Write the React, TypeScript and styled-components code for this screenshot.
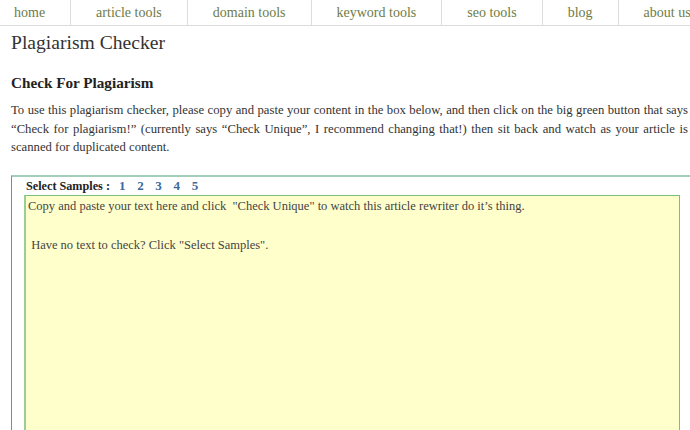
import React from 'react'
import styled, { createGlobalStyle } from 'styled-components'

const GlobalStyle = createGlobalStyle`
  html, body {
    margin: 0;
    padding: 0;
    background: #fff;
    overflow: hidden;
  }
  body {
    font-family: "Liberation Serif", "DejaVu Serif", serif;
    color: #333;
  }
`

const Page = styled.div`
  width: 720px;
  font-family: "Liberation Serif", "DejaVu Serif", serif;
`

const Nav = styled.nav`
  display: flex;
  height: 25px;
  border-bottom: 1px solid #dcdcdc;
  background: #fff;
`

const NavItem = styled.a<{ $first?: boolean }>`
  display: flex;
  align-items: center;
  padding: 1px 25px 0 ${(p) => (p.$first ? '14px' : '25px')};
  border-right: 1px solid #dcdcdc;
  font-size: 14px;
  color: #6e7b45;
  text-decoration: none;
  white-space: nowrap;
`

const Content = styled.main`
  padding: 0 0 0 11px;
`

const Title = styled.h1`
  margin: 5px 0 0;
  font-family: "Liberation Serif", serif;
  font-size: 19.6px;
  font-weight: normal;
  color: #333;
  line-height: 24px;
`

const Heading = styled.h2`
  margin: 18px 0 0;
  font-family: "Liberation Serif", serif;
  font-size: 15.2px;
  font-weight: bold;
  color: #222;
  line-height: 20px;
`

const Intro = styled.p`
  margin: 8px 0 0;
  width: 677px;
  font-size: 12.7px;
  line-height: 18.5px;
  text-align: justify;
  color: #333;
`

const CheckerBox = styled.section`
  margin-top: 18px;
  border: 1px solid #5f9f80;
  border-top: 2px solid #a3cfba;
  border-right: none;
  padding: 0 0 0 12px;
  height: 260px;
`

const SampleBar = styled.div`
  display: flex;
  align-items: baseline;
  height: 18px;
  padding-left: 2px;
`

const SampleLabel = styled.span`
  font-size: 12.2px;
  font-weight: bold;
  color: #222;
  margin-right: 9px;
  line-height: 18px;
`

const SampleLink = styled.a`
  font-size: 13px;
  font-weight: bold;
  color: #3a6a9e;
  text-decoration: none;
  width: 18.2px;
  line-height: 18px;
`

const TextArea = styled.div`
  width: 649px;
  height: 260px;
  background: #ffffcc;
  border: 1px solid #7cbf7c;
  border-left: 2px solid #98cf98;
  padding: 1px 2px 0;
  font-size: 12.5px;
  line-height: 19.5px;
  color: #444;
  white-space: pre-wrap;
`

const samples = [1, 2, 3, 4, 5]

export default function App() {
  return (
    <Page>
      <GlobalStyle />
      <Nav>
        <NavItem $first>home</NavItem>
        <NavItem>article tools</NavItem>
        <NavItem>domain tools</NavItem>
        <NavItem>keyword tools</NavItem>
        <NavItem>seo tools</NavItem>
        <NavItem>blog</NavItem>
        <NavItem>about us</NavItem>
      </Nav>
      <Content>
        <Title>Plagiarism Checker</Title>
        <Heading>Check For Plagiarism</Heading>
        <Intro>
          To use this plagiarism checker, please copy and paste your content in the box below, and then click on the big green button that says
          “Check for plagiarism!” (currently says “Check Unique”, I recommend changing that!) then sit back and watch as your article is
          scanned for duplicated content.
        </Intro>
        <CheckerBox>
          <SampleBar>
            <SampleLabel>Select Samples :</SampleLabel>
            {samples.map((n) => (
              <SampleLink key={n}>{n}</SampleLink>
            ))}
          </SampleBar>
          <TextArea>
            {'Copy and paste your text here and click  "Check Unique" to watch this article rewriter do it’s thing.\n\n Have no text to check? Click "Select Samples".'}
          </TextArea>
        </CheckerBox>
      </Content>
    </Page>
  )
}
